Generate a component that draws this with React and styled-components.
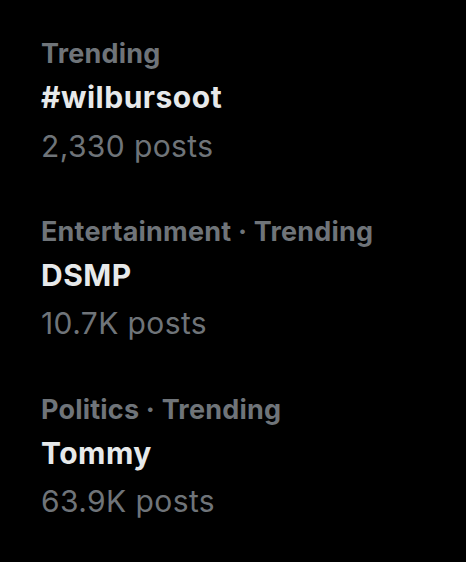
import React from "react";
import styled, { createGlobalStyle } from "styled-components";

const trends = [
    { context: "Trending", title: "#wilbursoot", posts: "2,330 posts" },
    { context: "Entertainment · Trending", title: "DSMP", posts: "10.7K posts" },
    { context: "Politics · Trending", title: "Tommy", posts: "63.9K posts" },
];

const GlobalStyle = createGlobalStyle`
    html, body {
        margin: 0;
        padding: 0;
        background: #000;
    }
    body {
        font-family: Inter, "Noto Sans", "Liberation Sans", sans-serif;
        -webkit-font-smoothing: antialiased;
    }
`;

const App = () => {
    return (
        <>
            <GlobalStyle />
            <TrendList>
                {trends.map((trend) => (
                    <TrendItem key={trend.title}>
                        <Context>{trend.context}</Context>
                        <Title>{trend.title}</Title>
                        <Posts>{trend.posts}</Posts>
                    </TrendItem>
                ))}
            </TrendList>
        </>
    );
};

export default App;

const TrendList = styled.div`
    width: 466px;
    height: 562px;
    box-sizing: border-box;
    padding: 34.2px 0 0 41px;
    display: flex;
    flex-direction: column;
    gap: 41.8px;
    background: #000;
`;

const TrendItem = styled.div`
    display: flex;
    flex-direction: column;
`;

const Context = styled.div`
    font-size: 27px;
    line-height: 40px;
    font-weight: 700;
    color: #6f7479;
    letter-spacing: 0.2px;
`;

const Title = styled.div`
    font-size: 30px;
    line-height: 47.5px;
    font-weight: 700;
    color: #e7e9ea;
    letter-spacing: 0.5px;
`;

const Posts = styled.div`
    font-size: 30px;
    line-height: 48.5px;
    font-weight: 400;
    color: #6f7479;
    letter-spacing: 0.4px;
`;
